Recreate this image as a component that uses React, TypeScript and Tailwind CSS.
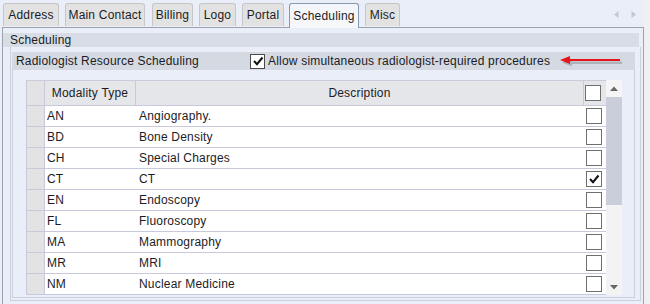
import React from "react";

const tabs = [
  { label: "Address", cls: "ml-[3px] w-[56px]" },
  { label: "Main Contact", cls: "ml-[6px] w-[80px]" },
  { label: "Billing", cls: "ml-[7px] w-[41px]" },
  { label: "Logo", cls: "ml-[6px] w-[37px]" },
  { label: "Portal", cls: "ml-[6px] w-[42px]" },
  { label: "Scheduling", cls: "ml-[5px] w-[70px]", active: true },
  { label: "Misc", cls: "ml-[6px] w-[35px]" },
];

const rows: [string, string, boolean][] = [
  ["AN", "Angiography.", false],
  ["BD", "Bone Density", false],
  ["CH", "Special Charges", false],
  ["CT", "CT", true],
  ["EN", "Endoscopy", false],
  ["FL", "Fluoroscopy", false],
  ["MA", "Mammography", false],
  ["MR", "MRI", false],
  ["NM", "Nuclear Medicine", false],
];

function Check({ checked, size }: { checked?: boolean; size: "sm" | "md" }) {
  return (
    <div
      className={
        (size === "md" ? "w-[16px] h-[16px] border-[#6f6f6f]" : "w-[15px] h-[15px] border-[#4a4a4a]") +
        " border bg-white flex items-center justify-center shrink-0"
      }
    >
      {checked && (
        <svg width="12" height="12" viewBox="0 0 12 12">
          <path d="M2 6 L5 9.2 L10.5 2.5" fill="none" stroke="#111" strokeWidth="2" />
        </svg>
      )}
    </div>
  );
}

export default function App() {
  return (
    <div className="w-[650px] h-[304px] bg-[#f0f0f0] flex overflow-hidden font-['Liberation_Sans',Arial,sans-serif] text-[12px] tracking-[0.2px] text-[#1c1c24]">
      <div className="w-[644px] h-full bg-[#e9eef8] flex flex-col">
        {/* Tabs */}
        <div className="h-[27px] flex items-end shrink-0 relative">
          {tabs.map((t) =>
            t.active ? (
              <div
                key={t.label}
                className={
                  t.cls +
                  " h-[25px] -mb-px relative z-10 rounded-t-[3px] border border-b-0 border-[#8799b0] bg-gradient-to-b from-[#f2f5fa] to-[#f7f8fa] flex items-center justify-center"
                }
              >
                {t.label}
              </div>
            ) : (
              <div
                key={t.label}
                className={
                  t.cls +
                  " h-[23px] mb-[1px] rounded-t-[3px] border border-b-0 border-[#c6c6c6] bg-[#e2e2e2] flex items-center justify-center"
                }
              >
                {t.label}
              </div>
            )
          )}
          <div className="ml-auto mr-[8px] mb-[9px] flex items-center gap-[12px]">
            <svg width="5" height="7" viewBox="0 0 5 7">
              <path d="M4.5 0 L0 3.5 L4.5 7 Z" fill="#c3c7cf" />
            </svg>
            <svg width="5" height="7" viewBox="0 0 5 7">
              <path d="M0.5 0 L5 3.5 L0.5 7 Z" fill="#c3c7cf" />
            </svg>
          </div>
        </div>

        {/* Panel */}
        <div className="ml-[2px] w-[642px] flex-1 border-l border-t border-r border-[#9da3ad] flex flex-col pt-[5px]">
          <div className="w-[636px] h-[14px] bg-[#d8dce5] pl-[7px] leading-[14px] shrink-0">Scheduling</div>

          <div className="ml-[7px] w-[631px] border-l border-r border-b border-[#c9cfdb] pt-[5px] pl-[1px] pb-[2px] flex flex-col">
            <div className="w-[623px] flex flex-col">
              {/* group header */}
              <div className="h-[18px] bg-[#d5d9e2] flex items-center">
                <div className="w-[238px] pl-[4px]">Radiologist Resource Scheduling</div>
                <Check checked size="sm" />
                <span className="ml-[3px]">Allow simultaneous radiologist-required procedures</span>
                <svg className="ml-[8px]" width="66" height="14" viewBox="0 0 66 14">
                  <path d="M4 8.5 L14 4.5 L14 7.5 L64 7.5 L64 10 L14 10 L14 12.5 Z" fill="#000" opacity="0.18" />
                  <path d="M2 6 L12 2 L12 5 L62 5 L62 7 L12 7 L12 10 Z" fill="#e8141c" />
                </svg>
              </div>
              {/* group body */}
              <div className="border-l border-r border-b border-[#c9cfdb] pt-[10px] pl-[13px] pb-[2px] flex">
                {/* table */}
                <div className="w-[580px] flex flex-col border-t border-[#cacad8]">
                  <div className="h-[25px] flex border-b border-[#c9c9dd] bg-[#e5e6ea]">
                    <div className="w-[19px] border-l border-r border-[#c9c9d6] bg-[#e3e3e5]" />
                    <div className="w-[91px] border-r border-[#c9c9d6] flex items-center justify-center">Modality Type</div>
                    <div className="w-[448px] border-r border-[#c9c9d6] flex items-center justify-center">Description</div>
                    <div className="w-[22px] flex items-center pl-[1px]">
                      <Check size="md" />
                    </div>
                  </div>
                  {rows.map(([code, desc, chk]) => (
                    <div key={code} className="h-[21px] flex border-b border-[#c9c9dd] bg-white">
                      <div className="w-[19px] border-l border-r border-[#c9c9dd] bg-[#e3e3e3]" />
                      <div className="w-[91px] pl-[2px] flex items-center">{code}</div>
                      <div className="w-[448px] pl-[3px] flex items-center">{desc}</div>
                      <div className="w-[22px] flex items-center pl-[2px]">
                        <Check checked={chk} size="md" />
                      </div>
                    </div>
                  ))}
                </div>
                {/* scrollbar */}
                <div className="w-[16px] flex flex-col bg-[#f3f3f3]">
                  <div className="h-[17px] flex items-center justify-center bg-[#f5f5f5]">
                    <svg width="8" height="5" viewBox="0 0 8 5">
                      <path d="M0 5 L4 0.5 L8 5 Z" fill="#666" />
                    </svg>
                  </div>
                  <div className="h-[108px] bg-[#cacdda]" />
                  <div className="flex-1" />
                  <div className="h-[16px] flex items-center justify-center">
                    <svg width="8" height="5" viewBox="0 0 8 5">
                      <path d="M0 0 L8 0 L4 4.5 Z" fill="#666" />
                    </svg>
                  </div>
                </div>
              </div>
            </div>
          </div>
        </div>
      </div>
    </div>
  );
}
